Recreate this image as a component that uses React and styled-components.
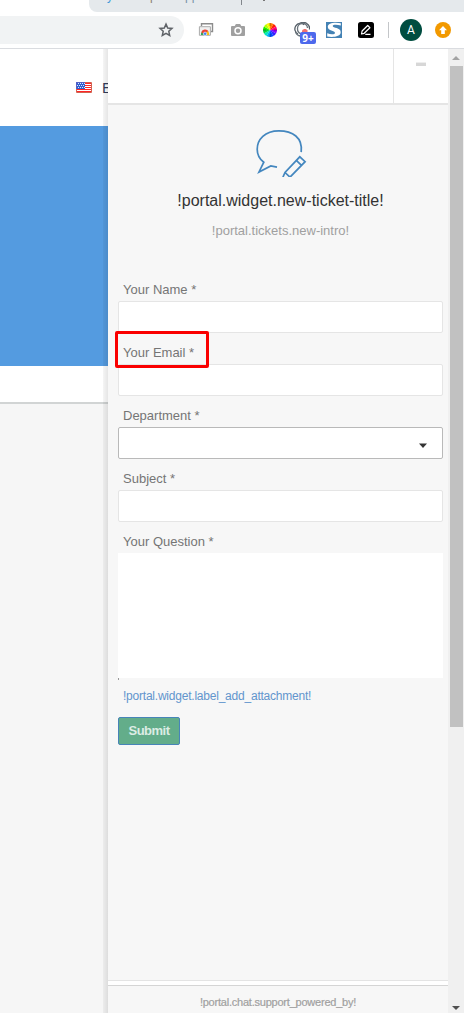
import React from "react";
import styled, { createGlobalStyle } from "styled-components";

const Global = createGlobalStyle`
  * { box-sizing: border-box; }
  body { margin: 0; background: #fff; font-family: "Liberation Sans", Arial, sans-serif; }
  svg { display: block; flex: none; }
`;

const Window = styled.div`
  width: 464px;
  height: 1013px;
  display: flex;
  flex-direction: column;
  overflow: hidden;
`;

const TabStrip = styled.div`
  height: 12px;
  flex: none;
  display: flex;
  padding-left: 89px;
`;
const Tab = styled.div`
  flex: 1;
  height: 12px;
  padding-left: 18px;
  display: flex;
  align-items: flex-start;
  overflow: hidden;
  background: #e5e9ec;
  border-bottom-left-radius: 8px;
`;
const TabLetter = styled.span`
  width: ${(p) => p.$w}px;
  font-size: 12px;
  line-height: 14px;
  margin-top: -11px;
  color: ${(p) => p.$c};
`;
const TabDivider = styled.div`
  width: 1px;
  height: 5px;
  background: #82878c;
  margin-right: 21px;
`;
const TabDot = styled.div`
  width: 2px;
  height: 1px;
  background: #777;
`;

const Toolbar = styled.div`
  height: 37px;
  flex: none;
  display: flex;
  align-items: center;
  border-bottom: 1px solid #dadce0;
`;
const AddressBar = styled.div`
  width: 184px;
  height: 28px;
  display: flex;
  align-items: center;
  justify-content: flex-end;
  padding-right: 10px;
  background: #f1f3f4;
  border-radius: 0 14px 14px 0;
`;
const Extensions = styled.div`
  flex: 1;
  display: flex;
  align-items: center;
  gap: 16px;
  padding-left: 14px;
`;
const BadgeHolder = styled.div`
  position: relative;
  width: 16px;
  height: 16px;
`;
const Badge = styled.span`
  position: absolute;
  left: 6px;
  top: 10px;
  width: 16px;
  height: 12px;
  border-radius: 2px;
  background: #4d69ec;
  color: #fff;
  font: bold 10px/12px "Open Sans", sans-serif;
  text-align: center;
`;
const Separator = styled.div`
  width: 1px;
  height: 16px;
  margin-left: -2px;
  margin-right: -5px;
  background: #c4c6c9;
`;
const Avatar = styled.div`
  width: 22px;
  height: 22px;
  margin-right: -3px;
  border-radius: 50%;
  background: #004d40;
  color: #fff;
  font: 12px/22px Roboto, sans-serif;
  text-align: center;
`;

const Content = styled.div`
  flex: 1;
  min-height: 0;
  display: flex;
`;
const Page = styled.div`
  width: 108px;
  display: flex;
  flex-direction: column;
  background: #f6f6f6;
`;
const PageHeader = styled.div`
  height: 77px;
  display: flex;
  align-items: center;
  gap: 10px;
  padding-left: 76px;
  background: #fff;
  overflow: hidden;
  color: #333d5c;
  font-size: 15px;
`;
const Hero = styled.div`
  height: 240px;
  background: #549be0;
`;
const PageStrip = styled.div`
  height: 38px;
  background: #fff;
  border-bottom: 2px solid #d1d4d4;
`;

const Widget = styled.div`
  position: relative;
  width: 340px;
  display: flex;
  flex-direction: column;
  background: #f7f7f7;
  &::before {
    content: "";
    position: absolute;
    left: -5px;
    top: 0;
    bottom: 0;
    width: 5px;
    background: linear-gradient(to right, rgba(0, 0, 0, 0.04), rgba(0, 0, 0, 0.1));
  }
`;
const WidgetHeader = styled.div`
  height: 56px;
  display: flex;
  justify-content: flex-end;
  background: #fff;
  border-bottom: 2px solid #e5e5e5;
`;
const MinimizeButton = styled.div`
  width: 55px;
  display: flex;
  justify-content: center;
  padding-top: 13px;
  border-left: 1px solid #e5e5e5;
  &::before {
    content: "";
    width: 10px;
    height: 3px;
    border-top: 1px solid #eee;
    background: #d7d7d7;
  }
`;
const WidgetBody = styled.div`
  flex: 1;
  display: flex;
  flex-direction: column;
  padding: 0 5px 0 10px;
`;
const Intro = styled.div`
  height: 171px;
  padding-top: 24px;
  display: flex;
  flex-direction: column;
  align-items: center;
`;
const Title = styled.div`
  margin-top: 14px;
  font-size: 16px;
  line-height: 20px;
  color: #333;
`;
const Subtitle = styled.div`
  margin-top: 11px;
  font-size: 13px;
  line-height: 18px;
  color: #a0a0a0;
`;
const Field = styled.div`
  height: ${(p) => p.$h || 63}px;
  display: flex;
  flex-direction: column;
`;
const Label = styled.label`
  position: relative;
  height: 25px;
  padding: 5px 0 0 5px;
  font-size: 13px;
  line-height: 17px;
  color: #757575;
`;
const Highlight = styled.div`
  position: absolute;
  left: -3px;
  top: -8px;
  width: 94px;
  height: 37px;
  border: 3px solid #fa0000;
  border-radius: 2px;
  z-index: 1;
`;
const Input = styled.div`
  width: 325px;
  height: 32px;
  border: 1px solid #e5e5e5;
  border-radius: 2px;
  background: #fff;
`;
const Select = styled(Input)`
  display: flex;
  align-items: center;
  justify-content: flex-end;
  padding: 4px 15px 0 0;
  border-color: #b9b9b9;
`;
const TextArea = styled.div`
  width: 325px;
  height: 125px;
  background: #fff;
`;
const CornerMark = styled.div`
  width: 1px;
  height: 2px;
  background: #999;
`;
const Attachment = styled.div`
  margin: 8px 0 0 5px;
  font-size: 12px;
  line-height: 16px;
  letter-spacing: -0.22px;
  color: #6295cd;
`;
const Submit = styled.div`
  width: 62px;
  height: 28px;
  margin-top: 13px;
  border: 1px solid #4784b8;
  border-radius: 2px;
  background: #63ad8a;
  color: #dcece4;
  font-size: 13px;
  font-weight: bold;
  letter-spacing: -0.5px;
  line-height: 26px;
  text-align: center;
`;
const Footer = styled.div`
  height: 33px;
  border-top: 1px solid #e4e4e4;
  background: #fff;
  padding-top: 4px;
`;
const Powered = styled.div`
  height: 28px;
  border-top: 1px solid #d5d5d5;
  background: #f7f7f7;
  color: #a0a0a0;
  font-size: 11px;
  letter-spacing: -0.22px;
  line-height: 32px;
  text-align: center;
  -webkit-text-stroke: 0.2px #a0a0a0;
`;

const Scrollbar = styled.div`
  width: 16px;
  display: flex;
  flex-direction: column;
  align-items: center;
  justify-content: space-between;
  background: #f0f0f0;
  padding: 7px 0 3px;
`;
const Thumb = styled.div`
  width: 13px;
  height: 661px;
  margin: 6px 0 auto 1px;
  background: #c1c1c1;
`;

const wedge = (i) => {
  const a = (i * Math.PI) / 6;
  const b = ((i + 1) * Math.PI) / 6;
  return `M8 8L${8 + 7 * Math.cos(a)} ${8 + 7 * Math.sin(a)}A7 7 0 0 1 ${8 + 7 * Math.cos(b)} ${8 + 7 * Math.sin(b)}Z`;
};
const wheel = ["#8a00ff", "#3020ff", "#0048ff", "#00a8ff", "#00e8c0", "#00d840", "#20ef00", "#b8ff00", "#fff000", "#ff8000", "#ff2000", "#ff0080"];

const StarIcon = () => (
  <svg width="16" height="16" viewBox="0 0 16 16" fill="none" stroke="#5f6368" strokeWidth="1.5">
    <path d="M8 2.1L9.7 6l4.3.4-3.2 2.9.9 4.2L8 11.3l-3.7 2.2.9-4.2L2 6.4 6.3 6z" />
  </svg>
);
const WindowsIcon = () => (
  <svg width="16" height="16" viewBox="0 0 16 16">
    <path d="M3.5 4V1.8h11v7.7H13" fill="none" stroke="#8c8c8c" strokeWidth="1.4" />
    <path d="M1.4 4.7h11v8.6h-11z" fill="#f0f0f0" stroke="#aaa" />
    <path d="M3 13a4 4 0 0 1 1-3.6l3 3.6z" fill="#34a853" />
    <path d="M3.2 10.2a4.2 4.2 0 0 1 7.4-1L7 13z" fill="#e94335" />
    <path d="M9.6 9a4 4 0 0 1 1.5 4H7z" fill="#fbbc05" />
    <circle cx="7.1" cy="11.8" r="1.7" fill="#4285f4" stroke="#fff" strokeWidth=".6" />
  </svg>
);
const CameraIcon = () => (
  <svg width="16" height="16" viewBox="0 0 16 16">
    <path d="M2 4h2.7l1.2-2h4.2l1.2 2H14a1 1 0 0 1 1 1v8a1 1 0 0 1-1 1H2a1 1 0 0 1-1-1V5a1 1 0 0 1 1-1z" fill="#a0a0a0" />
    <circle cx="8" cy="8.8" r="3" fill="#a0a0a0" stroke="#fff" strokeWidth="1.5" />
  </svg>
);
const WheelIcon = () => (
  <svg width="16" height="16" viewBox="0 0 16 16">
    {wheel.map((c, i) => <path key={i} d={wedge(i)} fill={c} />)}
    <path d="M8 1v3M8 12v3M1 8h3M12 8h3" stroke="#222" strokeWidth=".7" opacity=".6" />
  </svg>
);
const RingsIcon = () => (
  <svg width="16" height="16" viewBox="0 0 16 16" fill="none" stroke="#535d66" strokeWidth="1.3">
    <path d="M4 12A5.600 5.600 0 1 1 10.200 2.800" />
    <path d="M5.500 1.800a6.200 6.200 0 0 1 10 5.700" />
    <path d="M3.500 6.500a5 5 0 0 1 10-.5M3.500 6.500a5.500 5.500 0 0 0 4 5.500M1.500 10c1 2.500 3 4 5.500 4" stroke="#69737b" />
    <path d="M8 8.500c1.500-2 4.500-2 5.500 0v3H8z" fill="#ee7170" stroke="none" />
  </svg>
);
const SnagIcon = () => (
  <svg width="16" height="16" viewBox="0 0 16 16">
    <path d="M0 0h16v16H0z" fill="#4482b4" />
    <path d="M14.8 1.2v2.4c-4-1.2-8.1-1-8.1.5 0 2.2 8 1.4 8 6.1 0 4.5-8.2 5.4-13.5 4.2v-3.1c3.6 1.3 7.8 1.2 7.8-.4C9 8.3 1.8 9.4 1.8 4.8c0-4.2 7.3-4.8 13-3.6z" fill="#fff" />
  </svg>
);
const PenIcon = () => (
  <svg width="16" height="16" viewBox="0 0 16 16">
    <rect width="16" height="16" rx="2.5" fill="#000" />
    <path d="M3.5 12l.6-3 5.6-5.5 2.2 2.2L6.2 11.3zM7.3 12.4h5.2" fill="none" stroke="#fff" strokeWidth="1.2" strokeLinejoin="round" />
  </svg>
);
const UpdateIcon = () => (
  <svg width="16" height="16" viewBox="0 0 16 16">
    <circle cx="8" cy="8" r="8" fill="#f29900" />
    <path d="M8 4l4 4.2H9.8V12H6.2V8.2H4z" fill="#fff" />
  </svg>
);
const FlagIcon = () => (
  <svg width="16" height="11" viewBox="0 0 16 11">
    <path d="M0 0h16v11H0z" fill="#fff" />
    <path d="M0 1.5h16M0 3.5h16M0 5.5h16M0 7.5h16M0 9.5h16" stroke="#ff2525" />
    <path d="M0 0h9v7H0z" fill="#2f5fd0" />
    <path d="M2 1.5h7M1 3.5h7M2 5.5h7" stroke="#dce5fa" strokeDasharray="1 1" />
    <path d="M9 .5h6.500v10H.5V7" fill="none" stroke="#d06350" />
    <path d="M0 .5h9M.5 0v7" stroke="#5560c5" />
  </svg>
);
const TicketIcon = () => (
  <svg width="52" height="48" viewBox="1 0 52 48" fill="none" stroke="#4487bf" strokeWidth="1.7">
    <path d="M47.200 23.200C49 8.500 38.500 1.800 24.800 1.800 11 1.800 3.200 10.400 3.200 20.200c0 5.800 2.400 9.900 6.600 13L5 43l11.800-6 6.200 1.200" />
    <path d="M28.800 48.500L31 43.500 45.800 27.800l5.300 4.900L36 48.200l-5-4.700M42.300 31.400l5.200 5" />
  </svg>
);
const Caret = () => (
  <svg width="8" height="5" viewBox="0 0 8 5"><path d="M0 0.5h8L4 5z" fill="#333" /></svg>
);
const ScrollArrow = ({ down }) => (
  <svg width="8" height="4" viewBox="0 0 8 4">
    <path d={down ? "M0 0h8L4 4z" : "M0 4h8L4 0z"} fill={down ? "#505050" : "#a3a3a3"} />
  </svg>
);

export default function App() {
  return (
    <Window>
      <Global />
      <TabStrip>
        <Tab>
          <TabLetter $w={43} $c="#3e99d8">y</TabLetter>
          <TabLetter $w={35} $c="#8a8070">p</TabLetter>
          <TabLetter $w={56} $c="#7891a8">pp</TabLetter>
          <TabDivider />
          <TabDot />
        </Tab>
      </TabStrip>
      <Toolbar>
        <AddressBar><StarIcon /></AddressBar>
        <Extensions>
          <WindowsIcon />
          <CameraIcon />
          <WheelIcon />
          <BadgeHolder><RingsIcon /><Badge>9+</Badge></BadgeHolder>
          <SnagIcon />
          <PenIcon />
          <Separator />
          <Avatar>A</Avatar>
          <UpdateIcon />
        </Extensions>
      </Toolbar>
      <Content>
        <Page>
          <PageHeader><FlagIcon />E</PageHeader>
          <Hero />
          <PageStrip />
        </Page>
        <Widget>
          <WidgetHeader><MinimizeButton /></WidgetHeader>
          <WidgetBody>
            <Intro>
              <TicketIcon />
              <Title>!portal.widget.new-ticket-title!</Title>
              <Subtitle>!portal.tickets.new-intro!</Subtitle>
            </Intro>
            <Field><Label>Your Name *</Label><Input /></Field>
            <Field><Label>Your Email *<Highlight /></Label><Input /></Field>
            <Field><Label>Department *</Label><Select><Caret /></Select></Field>
            <Field><Label>Subject *</Label><Input /></Field>
            <Field $h={152}><Label>Your Question *</Label><TextArea /><CornerMark /></Field>
            <Attachment>!portal.widget.label_add_attachment!</Attachment>
            <Submit>Submit</Submit>
          </WidgetBody>
          <Footer><Powered>!portal.chat.support_powered_by!</Powered></Footer>
        </Widget>
        <Scrollbar>
          <ScrollArrow />
          <Thumb />
          <ScrollArrow down />
        </Scrollbar>
      </Content>
    </Window>
  );
}
